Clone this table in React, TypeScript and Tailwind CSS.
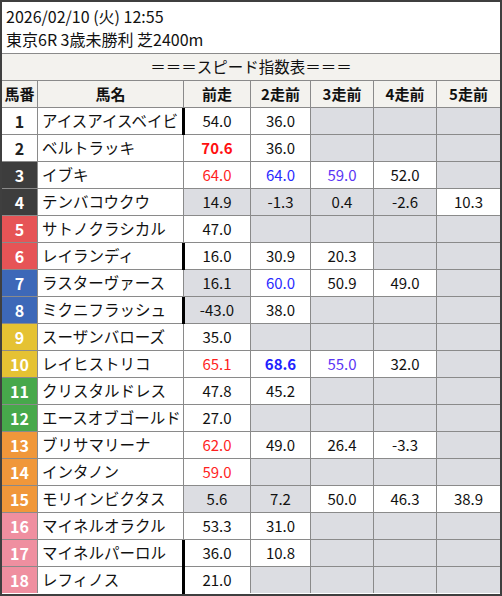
import * as React from "react";

// ============================================================
// DATA
// ============================================================

type Tone = "red" | "redBold" | "blue" | "blueBold" | "purple";

interface Cell {
  v?: string;
  gray?: boolean;
  tone?: Tone;
}

interface Horse {
  no: number;
  name: string;
  bar?: boolean;
  runs: Cell[];
}

const E: Cell = { gray: true };

const horses: Horse[] = [
  { no: 1, name: "アイスアイスベイビ", bar: true, runs: [{ v: "54.0" }, { v: "36.0" }, E, E, E] },
  { no: 2, name: "ベルトラッキ", runs: [{ v: "70.6", tone: "redBold" }, { v: "36.0" }, E, E, E] },
  { no: 3, name: "イブキ", runs: [{ v: "64.0", tone: "red" }, { v: "64.0", tone: "blue" }, { v: "59.0", tone: "purple" }, { v: "52.0" }, E] },
  { no: 4, name: "テンバコウクウ", runs: [{ v: "14.9", gray: true }, { v: "-1.3", gray: true }, { v: "0.4", gray: true }, { v: "-2.6", gray: true }, { v: "10.3" }] },
  { no: 5, name: "サトノクラシカル", runs: [{ v: "47.0" }, E, E, E, E] },
  { no: 6, name: "レイランディ", bar: true, runs: [{ v: "16.0" }, { v: "30.9" }, { v: "20.3" }, E, E] },
  { no: 7, name: "ラスターヴァース", runs: [{ v: "16.1", gray: true }, { v: "60.0", tone: "blue" }, { v: "50.9" }, { v: "49.0" }, E] },
  { no: 8, name: "ミクニフラッシュ", bar: true, runs: [{ v: "-43.0", gray: true }, { v: "38.0" }, E, E, E] },
  { no: 9, name: "スーザンバローズ", runs: [{ v: "35.0" }, E, E, E, E] },
  { no: 10, name: "レイヒストリコ", runs: [{ v: "65.1", tone: "red" }, { v: "68.6", tone: "blueBold" }, { v: "55.0", tone: "purple" }, { v: "32.0" }, E] },
  { no: 11, name: "クリスタルドレス", runs: [{ v: "47.8" }, { v: "45.2" }, E, E, E] },
  { no: 12, name: "エースオブゴールド", runs: [{ v: "27.0" }, E, E, E, E] },
  { no: 13, name: "ブリサマリーナ", runs: [{ v: "62.0", tone: "red" }, { v: "49.0" }, { v: "26.4" }, { v: "-3.3" }, E] },
  { no: 14, name: "インタノン", runs: [{ v: "59.0", tone: "red" }, E, E, E, E] },
  { no: 15, name: "モリインビクタス", runs: [{ v: "5.6", gray: true }, { v: "7.2", gray: true }, { v: "50.0" }, { v: "46.3" }, { v: "38.9" }] },
  { no: 16, name: "マイネルオラクル", runs: [{ v: "53.3" }, { v: "31.0" }, E, E, E] },
  { no: 17, name: "マイネルパーロル", bar: true, runs: [{ v: "36.0" }, { v: "10.8" }, E, E, E] },
  { no: 18, name: "レフィノス", bar: true, runs: [{ v: "21.0" }, E, E, E, E] },
];

// frame colours by horse number
function frameClass(no: number): string {
  if (no <= 2) return "bg-white text-[#222]";
  if (no <= 4) return "bg-[#3d3d3d] text-white";
  if (no <= 6) return "bg-[#e65456] text-white";
  if (no <= 8) return "bg-[#3d68b8] text-white";
  if (no <= 10) return "bg-[#e5c233] text-white";
  if (no <= 12) return "bg-[#47a84b] text-white";
  if (no <= 15) return "bg-[#f0973a] text-white";
  return "bg-[#ef8fa0] text-white";
}

const toneClass: Record<Tone, string> = {
  red: "text-[#ff1f1f]",
  redBold: "text-[#ff1010] font-bold",
  blue: "text-[#2a2aff]",
  blueBold: "text-[#2020ff] font-bold",
  purple: "text-[#5a35f5]",
};

const headers = ["馬番", "馬名", "前走", "2走前", "3走前", "4走前", "5走前"];

// ============================================================
// APP
// ============================================================

export default function App() {
  return (
    <div
      className="w-[502px] h-[596px] border-2 border-[#3f3f3f] bg-white text-[#111] overflow-hidden"
      style={{ fontFamily: '"Noto Sans CJK JP", "Noto Sans", sans-serif' }}
    >
      <div className="h-[51px] px-[4px] pt-[3px] text-[16px] leading-[23px]">
        <div>2026/02/10 (火) 12:55</div>
        <div>東京6R 3歳未勝利 芝2400m</div>
      </div>

      <div className="grid grid-cols-[35px_145px_66px_59px_62px_62px_63px] gap-px bg-[#8a8a8a] pt-px">
        <div className="col-span-7 h-[26px] bg-[#f3f2ee] flex items-center justify-center text-[15.5px]">
          ＝＝＝スピード指数表＝＝＝
        </div>

        {headers.map((h) => (
          <div
            key={h}
            className="h-[26px] bg-[#f3f2ee] flex items-center justify-center text-[15px] font-bold"
          >
            {h}
          </div>
        ))}

        {horses.map((r) => (
          <React.Fragment key={r.no}>
            <div
              className={`h-[26px] flex items-center justify-center text-[16px] font-bold ${frameClass(r.no)}`}
            >
              {r.no}
            </div>
            <div className="h-[26px] bg-white flex items-center pl-[4px] text-[15.5px] whitespace-nowrap overflow-hidden">
              {r.name}
            </div>
            {r.runs.map((c, i) => (
              <div
                key={i}
                className={`relative h-[26px] flex items-center justify-center text-[15px] ${
                  c.gray ? "bg-[#dcdde2]" : "bg-white"
                } ${c.tone ? toneClass[c.tone] : ""}`}
              >
                {i === 0 && r.bar && (
                  <span className="absolute left-[-2px] top-0 bottom-[-1px] w-[3px] bg-black" />
                )}
                {c.v}
              </div>
            ))}
          </React.Fragment>
        ))}
      </div>
    </div>
  );
}
